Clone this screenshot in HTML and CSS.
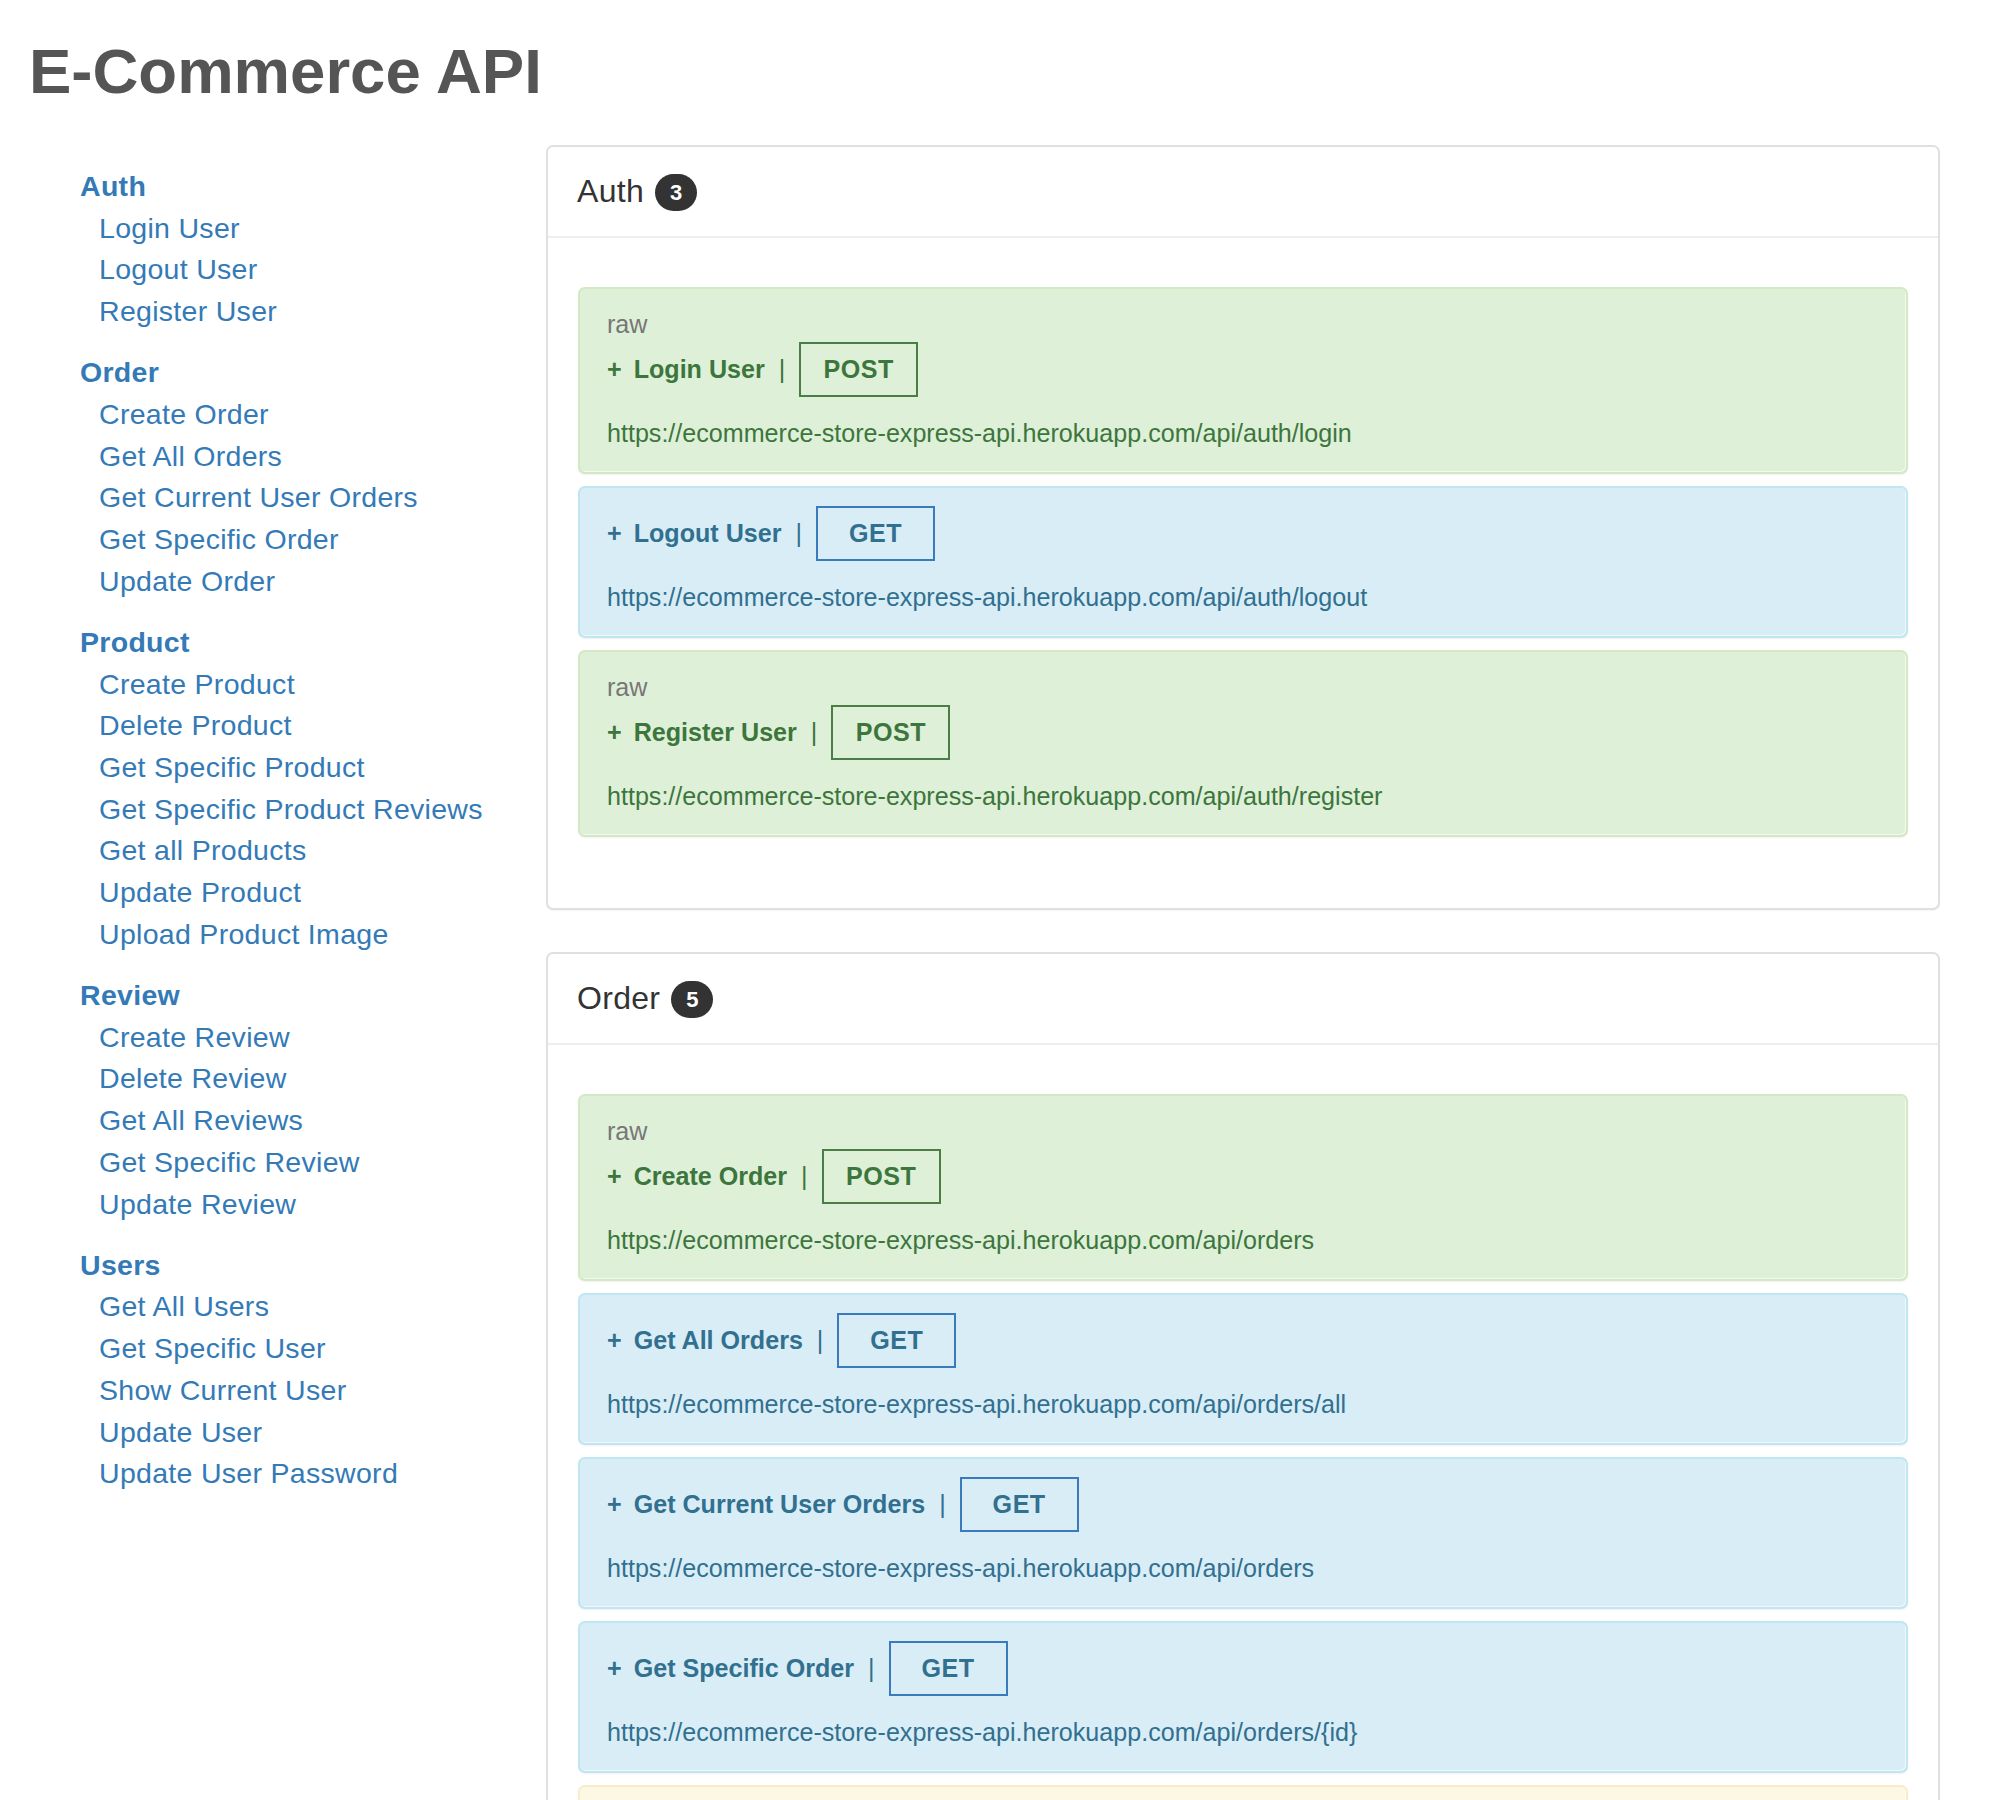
FILE: index.html
```html
<!DOCTYPE html>
<html lang="en">
<head>
<meta charset="utf-8">
<title>E-Commerce API</title>
<link rel="stylesheet" href="styles.css">
</head>
<body>
<div class="page">
  <h1 class="title">E-Commerce API</h1>
  <div class="layout">
    <nav class="sidebar">
      <div class="group">
        <a class="group-title" href="#auth">Auth</a>
        <a class="link" href="#">Login User</a>
        <a class="link" href="#">Logout User</a>
        <a class="link" href="#">Register User</a>
      </div>
      <div class="group">
        <a class="group-title" href="#order">Order</a>
        <a class="link" href="#">Create Order</a>
        <a class="link" href="#">Get All Orders</a>
        <a class="link" href="#">Get Current User Orders</a>
        <a class="link" href="#">Get Specific Order</a>
        <a class="link" href="#">Update Order</a>
      </div>
      <div class="group">
        <a class="group-title" href="#product">Product</a>
        <a class="link" href="#">Create Product</a>
        <a class="link" href="#">Delete Product</a>
        <a class="link" href="#">Get Specific Product</a>
        <a class="link" href="#">Get Specific Product Reviews</a>
        <a class="link" href="#">Get all Products</a>
        <a class="link" href="#">Update Product</a>
        <a class="link" href="#">Upload Product Image</a>
      </div>
      <div class="group">
        <a class="group-title" href="#review">Review</a>
        <a class="link" href="#">Create Review</a>
        <a class="link" href="#">Delete Review</a>
        <a class="link" href="#">Get All Reviews</a>
        <a class="link" href="#">Get Specific Review</a>
        <a class="link" href="#">Update Review</a>
      </div>
      <div class="group">
        <a class="group-title" href="#users">Users</a>
        <a class="link" href="#">Get All Users</a>
        <a class="link" href="#">Get Specific User</a>
        <a class="link" href="#">Show Current User</a>
        <a class="link" href="#">Update User</a>
        <a class="link" href="#">Update User Password</a>
      </div>
    </nav>

    <main class="main">
      <section class="panel" id="auth">
        <div class="panel-heading"><span class="panel-title">Auth</span><span class="badge">3</span></div>
        <div class="panel-body">
          <div class="alert alert-success">
            <div class="raw">raw</div>
            <div class="req"><span class="plus">+</span><span class="name">Login User</span><span class="sep">|</span><span class="method">POST</span></div>
            <div class="url">https://ecommerce-store-express-api.herokuapp.com/api/auth/login</div>
          </div>
          <div class="alert alert-info">
            <div class="req"><span class="plus">+</span><span class="name">Logout User</span><span class="sep">|</span><span class="method">GET</span></div>
            <div class="url">https://ecommerce-store-express-api.herokuapp.com/api/auth/logout</div>
          </div>
          <div class="alert alert-success">
            <div class="raw">raw</div>
            <div class="req"><span class="plus">+</span><span class="name">Register User</span><span class="sep">|</span><span class="method">POST</span></div>
            <div class="url">https://ecommerce-store-express-api.herokuapp.com/api/auth/register</div>
          </div>
        </div>
      </section>

      <section class="panel" id="order">
        <div class="panel-heading"><span class="panel-title">Order</span><span class="badge">5</span></div>
        <div class="panel-body">
          <div class="alert alert-success">
            <div class="raw">raw</div>
            <div class="req"><span class="plus">+</span><span class="name">Create Order</span><span class="sep">|</span><span class="method">POST</span></div>
            <div class="url">https://ecommerce-store-express-api.herokuapp.com/api/orders</div>
          </div>
          <div class="alert alert-info">
            <div class="req"><span class="plus">+</span><span class="name">Get All Orders</span><span class="sep">|</span><span class="method">GET</span></div>
            <div class="url">https://ecommerce-store-express-api.herokuapp.com/api/orders/all</div>
          </div>
          <div class="alert alert-info">
            <div class="req"><span class="plus">+</span><span class="name">Get Current User Orders</span><span class="sep">|</span><span class="method">GET</span></div>
            <div class="url">https://ecommerce-store-express-api.herokuapp.com/api/orders</div>
          </div>
          <div class="alert alert-info">
            <div class="req"><span class="plus">+</span><span class="name">Get Specific Order</span><span class="sep">|</span><span class="method">GET</span></div>
            <div class="url">https://ecommerce-store-express-api.herokuapp.com/api/orders/{id}</div>
          </div>
          <div class="alert alert-warning">
            <div class="raw">raw</div>
            <div class="req"><span class="plus">+</span><span class="name">Update Order</span><span class="sep">|</span><span class="method">PATCH</span></div>
            <div class="url">https://ecommerce-store-express-api.herokuapp.com/api/orders/{id}</div>
          </div>
        </div>
      </section>
    </main>
  </div>
</div>
</body>
</html>
```

FILE: styles.css
```css
html, body {
  margin: 0;
  padding: 0;
  background: #fff;
}

body {
  font-family: "Liberation Sans", Arial, Helvetica, sans-serif;
  color: #333;
}

.page {
  padding: 0 60px 40px 29px;
}

.title {
  margin: 0;
  padding-top: 37px;
  font-size: 63.5px;
  line-height: 1.1;
  font-weight: 700;
  color: #555;
}

.layout {
  display: flex;
  align-items: flex-start;
  margin-top: 38px;
}

/* Sidebar */
.sidebar {
  flex: 0 0 517px;
  box-sizing: border-box;
  padding: 21px 0 0 51px;
}

.group {
  display: flex;
  flex-direction: column;
  align-items: flex-start;
}

.group + .group {
  margin-top: 19.5px;
}

.group-title,
.link {
  color: #337ab7;
  text-decoration: none;
  font-size: 28.5px;
  line-height: 41.7px;
  letter-spacing: 0.3px;
}

.group-title {
  font-weight: 700;
}

.link {
  padding-left: 19px;
}

/* Main panels */
.main {
  flex: 1 1 auto;
  min-width: 0;
}

.panel {
  border: 2px solid #e0e0e0;
  border-radius: 7px;
  background: #fff;
  box-shadow: 0 1px 1px rgba(0, 0, 0, 0.04);
  margin-bottom: 42px;
}

.panel-heading {
  height: 89px;
  display: flex;
  align-items: center;
  padding: 0 29px;
  border-bottom: 2px solid #eeeeee;
}

.panel-title {
  font-size: 32px;
  letter-spacing: 0.3px;
  color: #333;
}

.badge {
  margin-left: 11px;
  width: 42px;
  height: 37px;
  border-radius: 19px;
  background: #333;
  color: #fff;
  font-weight: 700;
  font-size: 22px;
  display: flex;
  align-items: center;
  justify-content: center;
  margin-top: 3px;
}

.panel-body {
  padding: 49px 30px 71px;
}

/* Alerts */
.alert {
  border: 2px solid transparent;
  border-radius: 7px;
  padding: 18px 27px 21px;
  margin-bottom: 12px;
  font-size: 25.1px;
  box-shadow: inset -1px -1px 0 rgba(255, 255, 255, 0.6), 0 1px 2px rgba(0, 0, 0, 0.06);
}

.alert:last-child {
  margin-bottom: 0;
}

.alert-success {
  background: #dff0d8;
  border-color: #d3e8c4;
  color: #3c763d;
}

.alert-info {
  background: #d9edf7;
  border-color: #bfe6f2;
  color: #31708f;
}

.alert-warning {
  background: #fcf8e3;
  border-color: #faebcc;
  color: #8a6d3b;
}

.raw {
  color: #777;
  line-height: 35px;
}

.req {
  display: flex;
  align-items: center;
  height: 55px;
  font-weight: 700;
}

.plus {
  margin-right: 12px;
}

.sep {
  padding: 0 14px;
  font-weight: 400;
}

.method {
  box-sizing: border-box;
  width: 119px;
  height: 55px;
  display: flex;
  align-items: center;
  justify-content: center;
  border: 2px solid currentColor;
  letter-spacing: 0.5px;
}

.alert-success .method {
  border-color: #4a7e44;
}

.alert-info .method {
  border-color: #3a7bbd;
}

.url {
  margin-top: 18px;
  line-height: 36px;
}
```
